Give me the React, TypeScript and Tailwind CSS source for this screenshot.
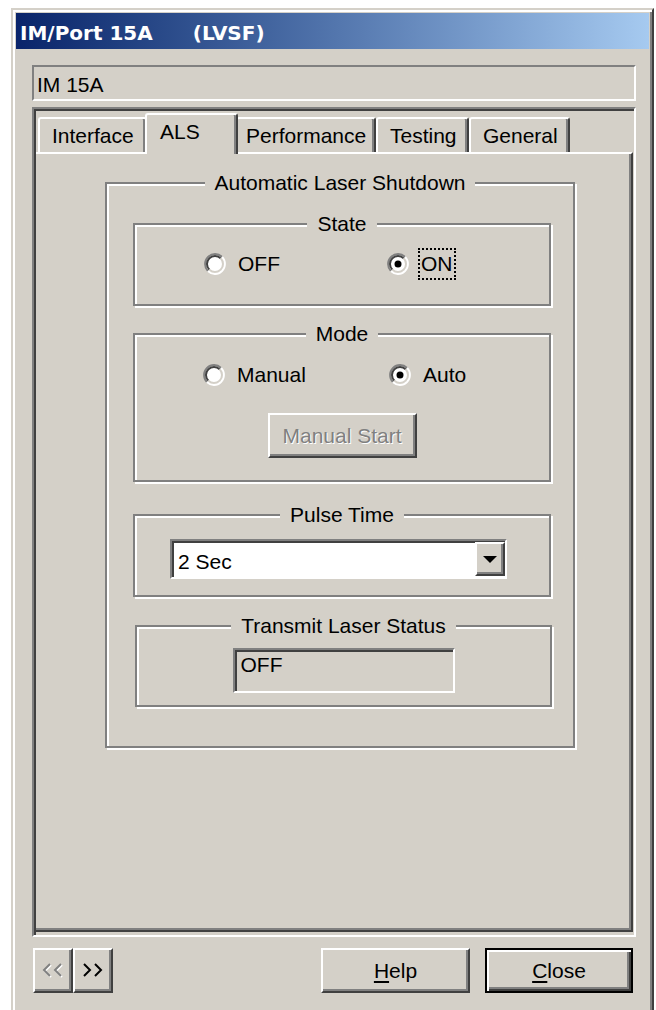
import React from 'react';

const raised =
  'border-2 border-t-white border-l-white border-r-[#404040] border-b-[#404040] shadow-[inset_-2px_-2px_0_#808080]';
const sunken =
  'border-2 border-t-[#808080] border-l-[#808080] border-r-white border-b-white shadow-[inset_2px_2px_0_#404040]';

function Radio({ checked }: { checked?: boolean }) {
  return (
    <svg width="24" height="24" viewBox="0 0 24 24" className="shrink-0">
      <circle cx="12" cy="12" r="9" fill="#fff" />
      <path d="M4.93 19.07A10 10 0 0 1 19.07 4.93" fill="none" stroke="#808080" strokeWidth="2" />
      <path d="M19.07 4.93A10 10 0 0 1 4.93 19.07" fill="none" stroke="#fff" strokeWidth="2" />
      <path d="M6.34 17.66A8 8 0 0 1 17.66 6.34" fill="none" stroke="#404040" strokeWidth="2" />
      <path d="M17.66 6.34A8 8 0 0 1 6.34 17.66" fill="none" stroke="#d4d0c8" strokeWidth="2" />
      {checked && <circle cx="12" cy="12" r="3.5" fill="#000" />}
    </svg>
  );
}

function Option({ label, checked, focused }: { label: string; checked?: boolean; focused?: boolean }) {
  return (
    <label className="flex items-center gap-[8px]">
      <Radio checked={checked} />
      <span className={focused ? 'px-[1px] py-[2px] border-2 border-dotted border-black' : 'px-[3px]'}>{label}</span>
    </label>
  );
}

function Group({ title, className, children }: { title: string; className: string; children?: React.ReactNode }) {
  return (
    <fieldset className={`border-2 border-[#808080] shadow-[inset_2px_2px_0_#fff,2px_2px_0_#fff] ${className}`}>
      <legend className="mx-auto px-[10px] bg-[#d4d0c8] leading-[24px]">{title}</legend>
      {children}
    </fieldset>
  );
}

function Tab({ label, className, active }: { label: string; className: string; active?: boolean }) {
  return (
    <div
      className={`border-t-2 border-l-2 border-white border-r-2 border-r-[#404040] shadow-[inset_-2px_0_0_#808080] rounded-t-[3px] pt-[5px] bg-[#d4d0c8] ${
        active ? 'relative z-10 -mx-[2px] -mb-[2px] h-[41px]' : 'h-[35px]'
      } ${className}`}
    >
      {label}
    </div>
  );
}

function Chevrons({ dir, disabled }: { dir: 'left' | 'right'; disabled?: boolean }) {
  const pts =
    dir === 'right'
      ? ['2,1 8,7 2,13', '13,1 19,7 13,13']
      : ['8,1 2,7 8,13', '19,1 13,7 19,13'];
  return (
    <svg width="22" height="15" viewBox="0 0 22 15">
      {disabled &&
        pts.map((p) => (
          <polyline key={'s' + p} points={p} transform="translate(1 1)" fill="none" stroke="#fff" strokeWidth="2" />
        ))}
      {pts.map((p) => (
        <polyline key={p} points={p} fill="none" stroke={disabled ? '#808080' : '#000'} strokeWidth="2" />
      ))}
    </svg>
  );
}

export default function App() {
  return (
    <div className="w-[656px] h-[1010px] overflow-hidden bg-white font-['Liberation_Sans',Arial,sans-serif] text-[21px] leading-[24px] text-black">
      <div className="ml-[11px] mt-[8px] w-[643px] h-[1010px] border-2 border-t-[#d4d0c8] border-l-[#d4d0c8] border-r-[#404040] border-b-[#404040] shadow-[inset_2px_2px_0_#fff,inset_-2px_-2px_0_#808080] bg-[#d4d0c8] p-[3px]">
        {/* title bar */}
        <div className="h-[36px] flex items-center pl-[4px] pt-[3px] bg-linear-to-r from-[#0a246a] to-[#a6caf0] text-white font-['DejaVu_Sans',sans-serif] font-bold text-[20px]">
          <span>IM/Port 15A</span>
          <span className="ml-[40px]">(LVSF)</span>
        </div>

        <div className="pl-[16px] pt-[16px]">
          <div className="w-[604px] h-[36px] border-2 border-t-[#808080] border-l-[#808080] border-b-white border-r-white pl-[3px] pt-[6px]">
            IM 15A
          </div>

          {/* property sheet */}
          <div className={`mt-[6px] w-[604px] h-[830px] flex flex-col ${sunken}`}>
            <div className="h-[43px] shrink-0 flex items-end pl-[4px]">
              <Tab label="Interface" className="w-[109px] pl-[12px]" />
              <Tab label="ALS" className="w-[93px] pl-[13px]" active />
              <Tab label="Performance" className="w-[140px] pl-[8px]" />
              <Tab label="Testing" className="w-[93px] pl-[12px]" />
              <Tab label="General" className="w-[101px] pl-[12px]" />
            </div>

            <div className="ml-[2px] w-[597px] h-[780px] border-t-2 border-t-white border-r-2 border-r-[#404040] border-b-2 border-b-[#404040] shadow-[inset_-2px_-2px_0_#808080] pt-[17px] pl-[69px]">
              <Group title="Automatic Laser Shutdown" className="w-[470px] h-[577px]">
                <Group title="State" className="mt-[17px] ml-[26px] w-[418px] h-[94px]">
                  <div className="mt-[12px] pl-[68px] flex items-center">
                    <div className="w-[183px]">
                      <Option label="OFF" />
                    </div>
                    <Option label="ON" checked focused />
                  </div>
                </Group>

                <Group title="Mode" className="mt-[16px] ml-[26px] w-[418px] h-[160px]">
                  <div className="mt-[17px] pl-[67px] flex items-center">
                    <div className="w-[186px]">
                      <Option label="Manual" />
                    </div>
                    <Option label="Auto" checked />
                  </div>
                  <button
                    disabled
                    className={`mt-[26px] mx-auto flex items-center justify-center w-[149px] h-[45px] text-[#808080] [text-shadow:1px_1px_0_#fff] ${raised}`}
                  >
                    Manual Start
                  </button>
                </Group>

                <Group title="Pulse Time" className="mt-[21px] ml-[26px] w-[418px] h-[94px]">
                  <div className="mt-[12px] ml-[35px] w-[337px] h-[40px] flex bg-white border-2 border-t-[#808080] border-l-[#808080] border-r-white border-b-white shadow-[inset_2px_2px_0_#404040]">
                    <div className="flex-1 pl-[6px] pt-[9px]">2 Sec</div>
                    <div className={`w-[30px] my-[1px] flex items-center justify-center bg-[#d4d0c8] ${raised}`}>
                      <svg width="14" height="7" viewBox="0 0 14 7">
                        <polygon points="0,0 14,0 7,7" fill="#000" />
                      </svg>
                    </div>
                  </div>
                </Group>

                <Group title="Transmit Laser Status" className="mt-[17px] ml-[28px] w-[417px] h-[93px]">
                  <div className={`mt-[10px] mx-auto w-[222px] h-[45px] pl-[6px] pt-[3px] ${sunken}`}>OFF</div>
                </Group>
              </Group>
            </div>
          </div>

          {/* dialog buttons */}
          <div className="mt-[11px] ml-[1px] flex">
            <button disabled className={`w-[40px] h-[45px] flex items-center justify-center ${raised}`}>
              <Chevrons dir="left" disabled />
            </button>
            <button className={`w-[40px] h-[45px] flex items-center justify-center ${raised}`}>
              <Chevrons dir="right" />
            </button>
            <button className={`ml-[208px] w-[149px] h-[45px] flex items-center justify-center ${raised}`}>
              <span>
                <span className="underline underline-offset-[3px] decoration-2">H</span>elp
              </span>
            </button>
            <button className="ml-[15px] w-[148px] h-[45px] flex items-center justify-center border-2 border-black shadow-[inset_2px_2px_0_#fff,inset_-2px_-2px_0_#404040,inset_-4px_-4px_0_#808080]">
              <span>
                <span className="underline underline-offset-[3px] decoration-2">C</span>lose
              </span>
            </button>
          </div>
        </div>
      </div>
    </div>
  );
}
